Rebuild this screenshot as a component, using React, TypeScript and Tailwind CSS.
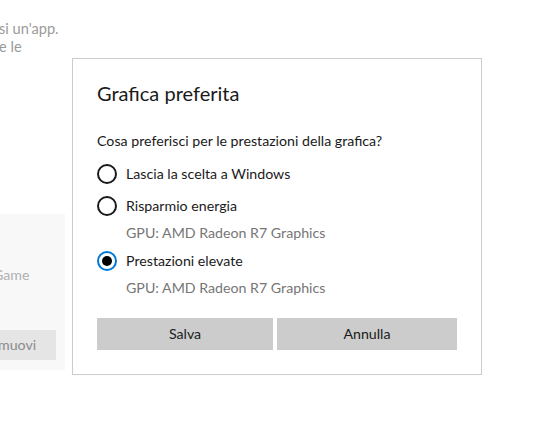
import React from "react";

function Radio({ checked }: { checked?: boolean }) {
  return checked ? (
    <span className="flex h-5 w-5 shrink-0 items-center justify-center rounded-full border-2 border-[#0078d7]">
      <span className="h-2.5 w-2.5 rounded-full bg-black" />
    </span>
  ) : (
    <span className="h-5 w-5 shrink-0 rounded-full border-2 border-[#1a1a1a]" />
  );
}

export default function App() {
  return (
    <div
      className="relative h-[421px] w-[540px] overflow-hidden bg-white text-[#1a1a1a]"
      style={{ fontFamily: 'Lato, "Noto Sans", sans-serif' }}
    >
      {/* page behind the dialog */}
      <div className="pt-[20px] text-[14.6px] leading-[18px] text-[#9a9a9a]">
        <div className="-ml-[1px]">si un'app.</div>
        <div className="-ml-[1px]">e le</div>
      </div>
      <div className="mt-[158px] h-[156px] w-[65px] bg-[#f8f8f8]">
        <div className="pt-[52px] text-[14.2px] leading-[18px] text-[#b0b0b0] -ml-[7px]">Game</div>
        <div className="mt-[46px] flex h-[30px] w-[56px] items-center bg-[#e5e5e5] text-[14.2px] text-[#8a8a8a]">
          <span className="-ml-[2px]">muovi</span>
        </div>
      </div>

      {/* dialog */}
      <div className="absolute left-[72px] top-[58px] h-[317px] w-[410px] border border-[#cccccc] bg-white px-6">
        <h2 className="pt-[20px] text-[20px] leading-[28px]">Grafica preferita</h2>
        <p className="mt-[24px] text-[14.2px] leading-[20px]">
          Cosa preferisci per le prestazioni della grafica?
        </p>

        <div className="mt-[12px] flex flex-col text-[14.2px]">
          <label className="flex h-[22px] items-center gap-[9px]">
            <Radio />
            Lascia la scelta a Windows
          </label>
          <label className="mt-[10px] flex h-[22px] items-center gap-[9px]">
            <Radio />
            Risparmio energia
          </label>
          <div className="mt-[6px] pl-[29px] leading-[20px] text-[#767676]">
            GPU: AMD Radeon R7 Graphics
          </div>
          <label className="mt-[7px] flex h-[22px] items-center gap-[9px]">
            <Radio checked />
            Prestazioni elevate
          </label>
          <div className="mt-[6px] pl-[29px] leading-[20px] text-[#767676]">
            GPU: AMD Radeon R7 Graphics
          </div>
        </div>

        <div className="mt-[20px] flex gap-[4px]">
          <button className="h-[32px] w-[176px] bg-[#cccccc] text-[14.2px]">Salva</button>
          <button className="h-[32px] w-[180px] bg-[#cccccc] text-[14.2px]">Annulla</button>
        </div>
      </div>
    </div>
  );
}
